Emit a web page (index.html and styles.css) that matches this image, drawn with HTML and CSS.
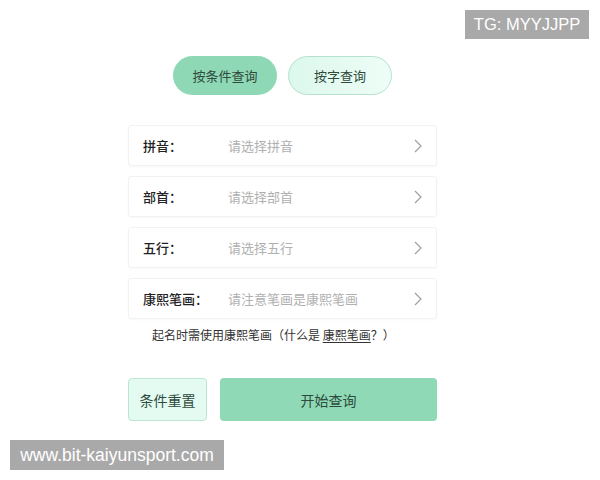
FILE: index.html
```html
<!DOCTYPE html>
<html lang="zh">
<head>
<meta charset="utf-8">
<link rel="stylesheet" href="styles.css">
</head>
<body>
<div class="page">
  <div class="tabs">
    <div class="tab tab-active">按条件查询</div>
    <div class="tab tab-plain">按字查询</div>
  </div>
  <div class="rows">
    <div class="row"><span class="label">拼音：</span><span class="ph">请选择拼音</span><svg class="chev" width="8" height="14" viewBox="0 0 8 14"><path d="M1 1 L7 7 L1 13" fill="none" stroke="#a0a0a0" stroke-width="1.2"/></svg></div>
    <div class="row"><span class="label">部首：</span><span class="ph">请选择部首</span><svg class="chev" width="8" height="14" viewBox="0 0 8 14"><path d="M1 1 L7 7 L1 13" fill="none" stroke="#a0a0a0" stroke-width="1.2"/></svg></div>
    <div class="row"><span class="label">五行：</span><span class="ph">请选择五行</span><svg class="chev" width="8" height="14" viewBox="0 0 8 14"><path d="M1 1 L7 7 L1 13" fill="none" stroke="#a0a0a0" stroke-width="1.2"/></svg></div>
    <div class="row"><span class="label">康熙笔画：</span><span class="ph">请注意笔画是康熙笔画</span><svg class="chev" width="8" height="14" viewBox="0 0 8 14"><path d="M1 1 L7 7 L1 13" fill="none" stroke="#a0a0a0" stroke-width="1.2"/></svg></div>
  </div>
  <p class="note">起名时需使用康熙笔画（什么是 <u>康熙笔画</u>？）</p>
  <div class="actions">
    <div class="btn btn-reset">条件重置</div>
    <div class="btn btn-go">开始查询</div>
  </div>
</div>
<div class="badge">TG: MYYJJPP</div>
<div class="watermark">www.bit-kaiyunsport.com</div>
</body>
</html>
```
FILE: styles.css
```css
html, body {
  margin: 0;
  padding: 0;
  background: #ffffff;
  width: 600px;
  height: 480px;
  overflow: hidden;
  font-family: "Noto Sans CJK SC", "Noto Sans", sans-serif;
}
.page {
  width: 309px;
  margin-left: 128px;
  padding-top: 56px;
  display: flex;
  flex-direction: column;
}
.tabs {
  display: flex;
  justify-content: center;
  gap: 11px;
}
.tab {
  width: 104px;
  height: 39px;
  box-sizing: border-box;
  border-radius: 20px;
  display: flex;
  align-items: center;
  justify-content: center;
  font-size: 13px;
  color: #2e4a3c;
}
.tab-active {
  background: #8fd8b6;
}
.tab-plain {
  background: linear-gradient(90deg, #dcf8ec, #eefdf7);
  border: 1px solid #b4e2cd;
}
.rows {
  margin-top: 30px;
  display: flex;
  flex-direction: column;
  gap: 10px;
}
.row {
  height: 41px;
  box-sizing: border-box;
  border: 1px solid #f2f2f2;
  border-radius: 3px;
  box-shadow: 0 1px 2px rgba(0,0,0,0.03);
  display: flex;
  align-items: center;
  padding: 0 14px 0 14px;
  font-size: 13px;
}
.label {
  width: 85px;
  color: #222;
  font-weight: 500;
}
.ph {
  flex: 1;
  color: #b0b0b0;
}
.chev {
  display: block;
}
.note {
  margin: 7px 0 0 24px;
  font-size: 12px;
  color: #333;
  line-height: 18px;
}
.note u {
  text-underline-offset: 2px;
}
.actions {
  margin-top: 34px;
  display: flex;
  gap: 13px;
}
.btn {
  height: 43px;
  box-sizing: border-box;
  border-radius: 4px;
  display: flex;
  align-items: center;
  justify-content: center;
  font-size: 14px;
  color: #2e4a3c;
}
.btn-reset {
  width: 79px;
  background: #e4fbf2;
  border: 1px solid #bde5d2;
}
.btn-go {
  flex: 1;
  background: #8fd9b6;
}
.badge {
  position: absolute;
  left: 465px;
  top: 10px;
  width: 124px;
  height: 29px;
  background: #a9a9a9;
  color: #fff;
  font-family: "Liberation Sans", Arial, sans-serif;
  font-size: 16.5px;
  display: flex;
  align-items: center;
  justify-content: center;
}
.watermark {
  position: absolute;
  left: 10px;
  top: 440px;
  width: 214px;
  height: 30px;
  background: #a9a9a9;
  color: #fff;
  font-family: "Liberation Sans", Arial, sans-serif;
  font-size: 17.5px;
  display: flex;
  align-items: center;
  justify-content: center;
}
```
